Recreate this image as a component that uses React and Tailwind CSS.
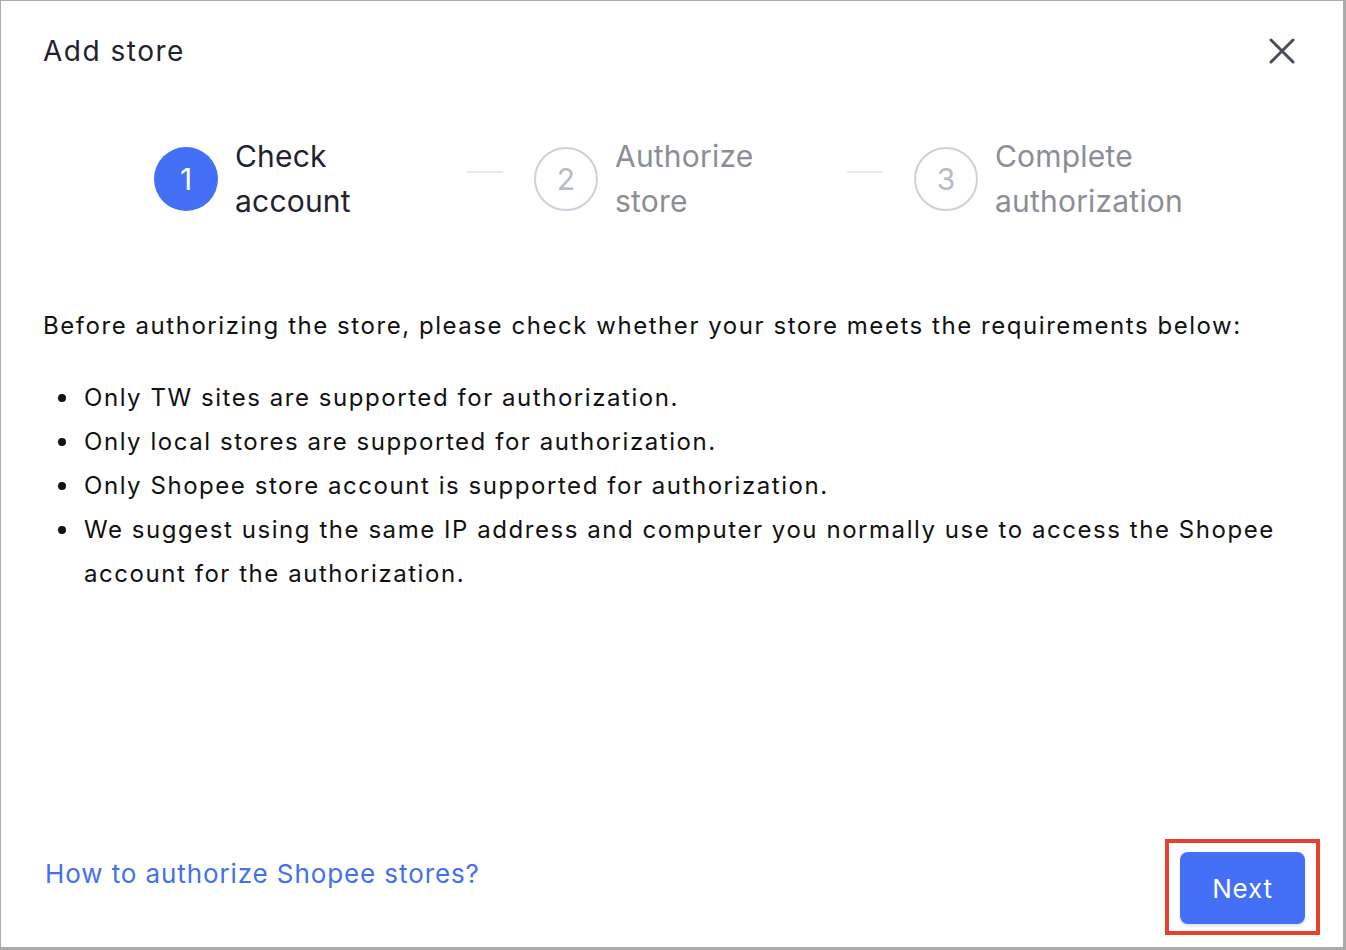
import React from 'react';

const steps = [
  {num: '1', lines: ['Check', 'account'], active: true},
  {num: '2', lines: ['Authorize', 'store']},
  {num: '3', lines: ['Complete', 'authorization']},
];

const rules = [
  'Only TW sites are supported for authorization.',
  'Only local stores are supported for authorization.',
  'Only Shopee store account is supported for authorization.',
];

function Step({step, last}) {
  return (
    <div className="flex items-center w-[380px] shrink-0">
      {step.active ? (
        <div className="w-[64px] h-[64px] rounded-full bg-[#4370f6] text-white flex items-center justify-center text-[30px] shrink-0">
          {step.num}
        </div>
      ) : (
        <div className="w-[64px] h-[64px] rounded-full border-2 border-[#cbd0da] text-[#b6bbc7] flex items-center justify-center text-[30px] shrink-0">
          {step.num}
        </div>
      )}
      <div className={`ml-[17px] w-[216px] shrink-0 text-[30px] leading-[45px] tracking-[0.2px] ${step.active ? 'text-[#1f2330]' : 'text-[#8b8e96]'}`}>
        {step.lines[0]}
        <br />
        {step.lines[1]}
      </div>
      {!last && <div className="self-start mt-[37px] ml-[16px] w-[36px] h-[2px] bg-[#e8e9ec] shrink-0" />}
    </div>
  );
}

export default function App() {
  return (
    <div
      className="w-[1346px] h-[950px] bg-white border-t border-l border-r-[3px] border-b-[3px] border-[#ababab] flex flex-col text-[#1f2330]"
      style={{fontFamily: 'Inter, "Noto Sans", sans-serif'}}
    >
      {/* header */}
      <div className="flex items-center justify-between pl-[42px] pr-[48px] pt-[32px]">
        <h2 className="text-[28px] leading-[36px] tracking-[1.5px]">Add store</h2>
        <svg width="26" height="26" viewBox="0 0 26 26" fill="none" stroke="#474c59" strokeWidth="3" strokeLinecap="round">
          <path d="M2 2L24 24M24 2L2 24" />
        </svg>
      </div>

      {/* steps */}
      <div className="flex pl-[153px] mt-[65px]">
        {steps.map((s, i) => (
          <Step key={s.num} step={s} last={i === steps.length - 1} />
        ))}
      </div>

      {/* body */}
      <div className="pl-[42px] pr-[10px] mt-[80px] text-[24px] leading-[44px] tracking-[1.55px] text-[#111111]">
        <p>Before authorizing the store, please check whether your store meets the requirements below:</p>
        <ul className="mt-[28px]">
          {rules.map((r) => (
            <li key={r} className="flex pl-[15px]">
              <span className="w-[8px] h-[8px] rounded-full bg-[#111111] mt-[18px] shrink-0" />
              <span className="ml-[18px]">{r}</span>
            </li>
          ))}
          <li className="flex pl-[15px]">
            <span className="w-[8px] h-[8px] rounded-full bg-[#111111] mt-[18px] shrink-0" />
            <span className="ml-[18px] whitespace-nowrap">
              We suggest using the same IP address and computer you normally use to access the Shopee
              <br />
              account for the authorization.
            </span>
          </li>
        </ul>
      </div>

      {/* footer */}
      <div className="mt-auto flex items-start justify-between pl-[44px] pr-[23px] pb-[12px]">
        <a className="mt-[17px] text-[26px] leading-[36px] tracking-[0.9px] text-[#4370f0]">How to authorize Shopee stores?</a>
        <div className="border-[4px] border-[#e5432d] pt-[9px] pb-[7px] px-[11px]">
          <button className="w-[125px] h-[72px] rounded-[8px] bg-[#4370f6] text-white text-[26px] tracking-[0.8px] shadow-[0_2px_3px_rgba(0,0,0,0.12)]">
            Next
          </button>
        </div>
      </div>
    </div>
  );
}
